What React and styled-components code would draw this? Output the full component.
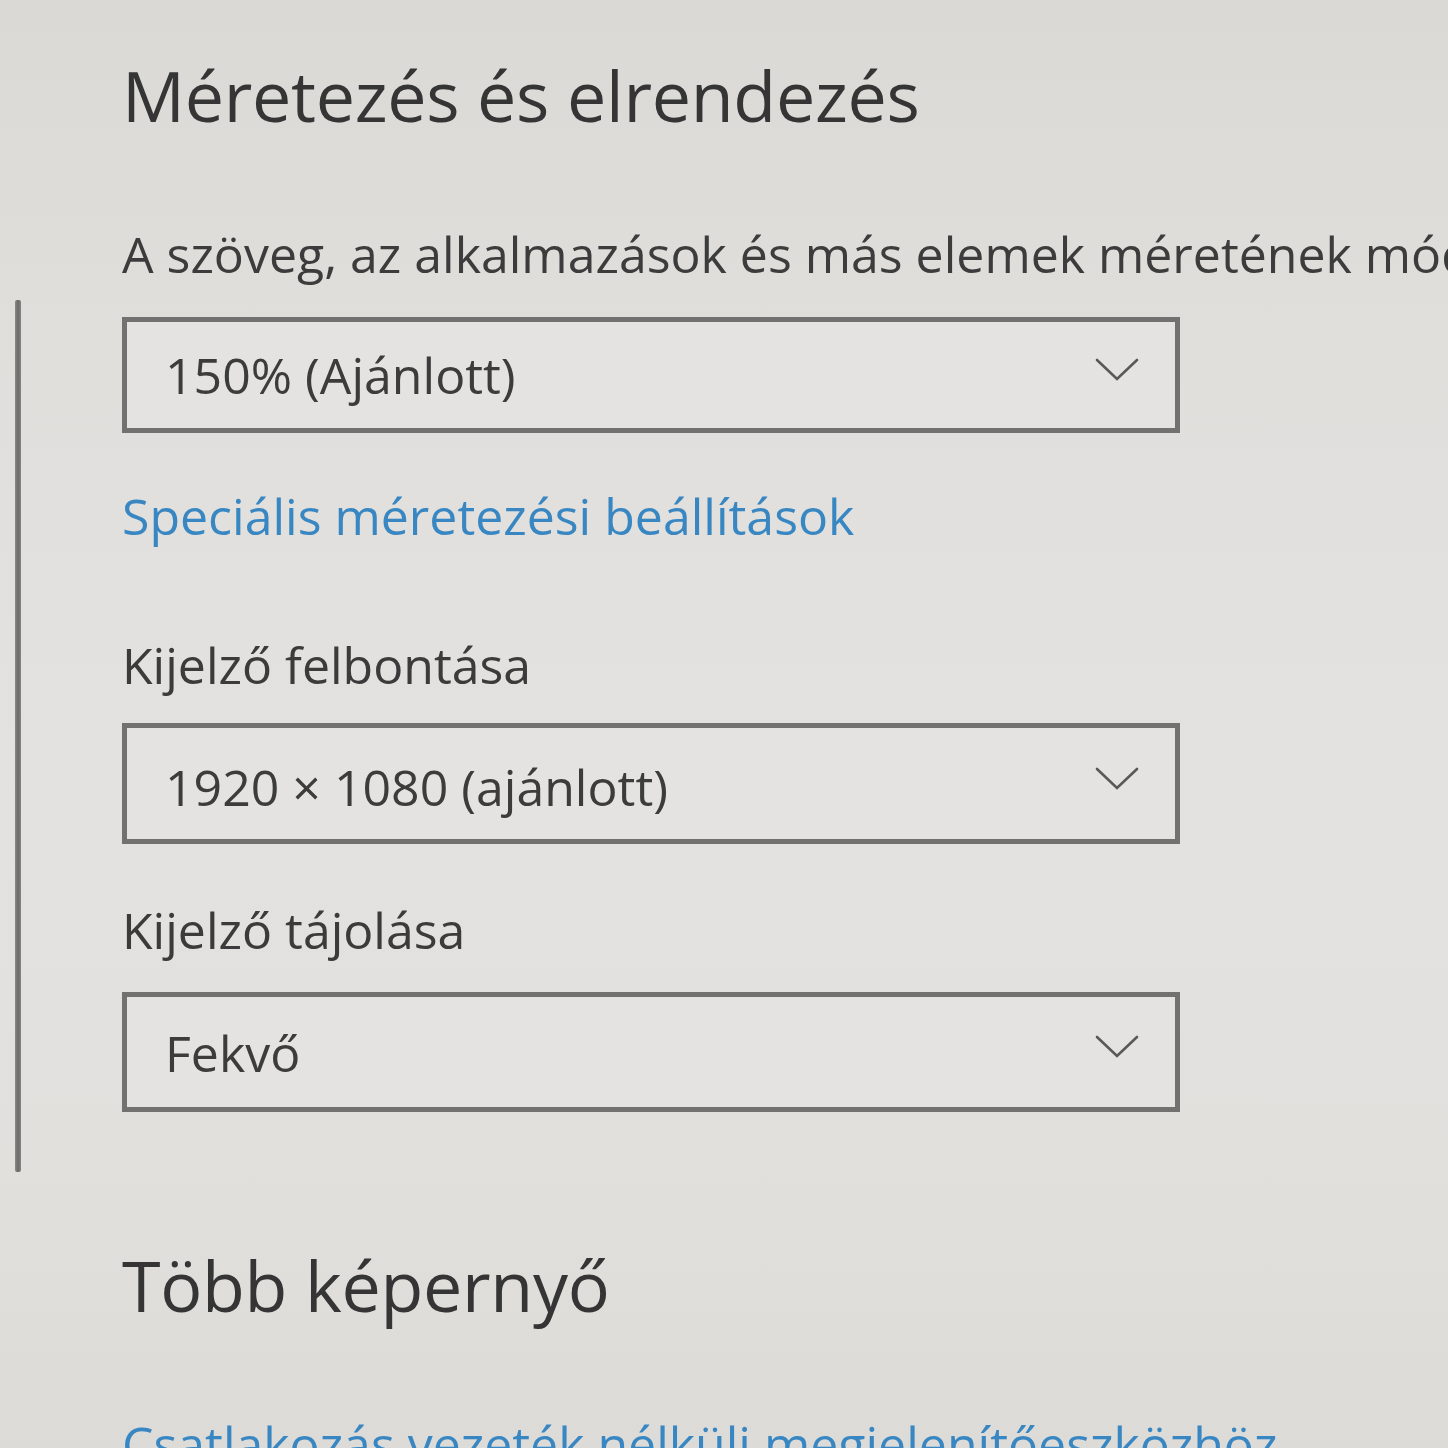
import React from "react";
import styled, { createGlobalStyle } from "styled-components";

const GlobalStyle = createGlobalStyle`
  html, body {
    margin: 0;
    padding: 0;
    overflow: hidden;
  }
  body {
    font-family: "Open Sans", "Noto Sans", sans-serif;
    background: #e0dfdc;
  }
`;

const Page = styled.div`
  width: 1448px;
  height: 1448px;
  overflow: hidden;
  display: flex;
  flex-direction: row;
  background: linear-gradient(
    180deg,
    #dad9d5 0%,
    #e0dfdc 25%,
    #e3e2e0 55%,
    #e1e0dd 80%,
    #dcdbd8 100%
  );
`;

const Rail = styled.aside`
  flex: 0 0 122px;
  display: flex;
  flex-direction: column;
  padding-top: 300px;
  padding-left: 15px;
  box-sizing: border-box;
`;

const RailBar = styled.div`
  flex: 0 0 auto;
  width: 6px;
  height: 872px;
  border-radius: 2px;
  background: linear-gradient(90deg, #8a8987 0%, #6b6a68 50%, #858482 100%);
`;

const Content = styled.main`
  flex: 1 1 auto;
  min-width: 0;
  display: flex;
  flex-direction: column;
  align-items: flex-start;
  padding-top: 60px;
  color: #3a3a3a;

  & > * {
    flex-shrink: 0;
  }
`;

const SectionTitle = styled.h2`
  margin: ${(p) => p.$gap || 0}px 0 0 0;
  font-size: 70px;
  line-height: 70px;
  font-weight: 400;
  color: #353535;
  white-space: nowrap;
  letter-spacing: -0.3px;
`;

const Description = styled.p`
  margin: ${(p) => p.$gap || 0}px 0 0 0;
  font-size: 50px;
  line-height: 60px;
  font-weight: 400;
  color: #3c3c3c;
  white-space: nowrap;
`;

const FieldLabel = styled.div`
  margin-top: ${(p) => p.$gap || 0}px;
  font-size: 50px;
  line-height: 60px;
  font-weight: 400;
  color: #3b3b3b;
  white-space: nowrap;
`;

const Link = styled.a`
  margin-top: ${(p) => p.$gap || 0}px;
  font-size: 50px;
  line-height: 60px;
  font-weight: 400;
  color: #3987c2;
  text-decoration: none;
  white-space: nowrap;
  cursor: pointer;
`;

const Select = styled.div`
  margin-top: ${(p) => p.$gap || 0}px;
  width: 1058px;
  height: ${(p) => p.$height || 116}px;
  box-sizing: border-box;
  border: 5px solid #727170;
  display: flex;
  align-items: center;
  justify-content: space-between;
  padding: 0 36px 0 38px;
  background: #e4e3e1;
`;

const SelectValue = styled.span`
  font-size: 50px;
  line-height: 60px;
  color: #3c3c3c;
  white-space: nowrap;
  margin-top: ${(p) => p.$shift || 0}px;
`;

const ChevronSvg = styled.svg`
  width: 44px;
  height: 24px;
  margin-bottom: 10px;
  flex: 0 0 auto;
`;

const Chevron = () => (
  <ChevronSvg viewBox="0 0 44 24" fill="none">
    <polyline
      points="2,2 22,21 42,2"
      stroke="#595959"
      strokeWidth="2.6"
      strokeLinecap="round"
      strokeLinejoin="miter"
    />
  </ChevronSvg>
);

export default function App() {
  return (
    <>
      <GlobalStyle />
      <Page>
        <Rail>
          <RailBar />
        </Rail>
        <Content>
          <SectionTitle>Méretezés és elrendezés</SectionTitle>
          <Description $gap={94}>
            A szöveg, az alkalmazások és más elemek méretének módosítása
          </Description>
          <Select $gap={33} $height={116}>
            <SelectValue>150% (Ajánlott)</SelectValue>
            <Chevron />
          </Select>
          <Link $gap={53}>Speciális méretezési beállítások</Link>
          <FieldLabel $gap={89}>Kijelző felbontása</FieldLabel>
          <Select $gap={28} $height={121}>
            <SelectValue $shift={6}>1920 × 1080 (ajánlott)</SelectValue>
            <Chevron />
          </Select>
          <FieldLabel $gap={56}>Kijelző tájolása</FieldLabel>
          <Select $gap={32} $height={120}>
            <SelectValue $shift={2}>Fekvő</SelectValue>
            <Chevron />
          </Select>
          <SectionTitle $gap={138}>Több képernyő</SectionTitle>
          <Link $gap={94}>Csatlakozás vezeték nélküli megjelenítőeszközhöz</Link>
        </Content>
      </Page>
    </>
  );
}
